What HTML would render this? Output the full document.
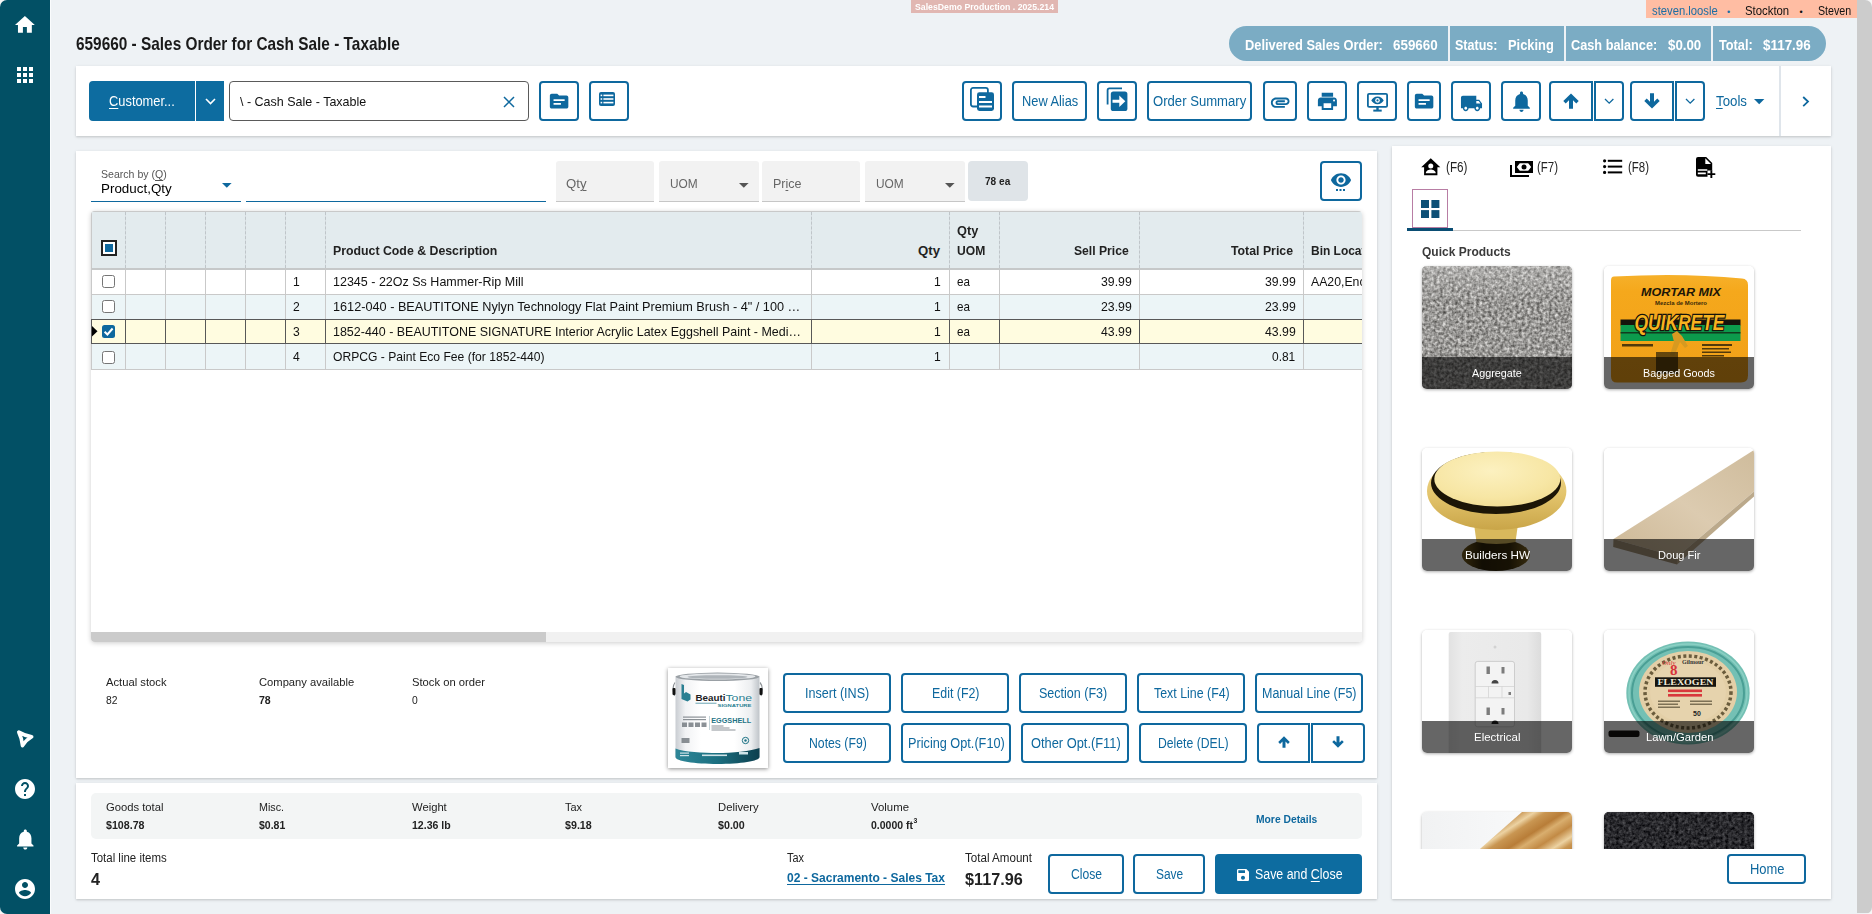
<!DOCTYPE html>
<html lang="en">
<head>
<meta charset="utf-8">
<title>659660 - Sales Order for Cash Sale - Taxable</title>
<style>
html,body{margin:0;padding:0}
html{background:#f7f6f6}
body{width:1872px;height:914px;position:relative;overflow:hidden;font-family:"Liberation Sans",sans-serif;color:#212529;font-size:13px}
#app{position:absolute;left:0;top:0;width:1872px;height:914px;background:#eef2f5;border-radius:7px;overflow:hidden}
#app *{box-sizing:border-box}
.a{position:absolute;margin:0;padding:0}
.t{position:absolute;white-space:nowrap;line-height:1;transform-origin:0 50%;display:block}
.i{position:absolute;display:block;overflow:visible}
.card{position:absolute;background:#fff;box-shadow:0 1px 2px rgba(0,0,0,.13),0 1px 4px rgba(0,0,0,.08)}
.btn{position:absolute;margin:0;padding:0;border:2px solid #0e689e;border-radius:4px;background:#fff;color:#0e689e;font:inherit;display:block}
.btn.p{background:#0d6ca0;border-color:#0d6ca0;color:#fff}
.btn.l{border-radius:4px 0 0 4px}
.btn.r{border-radius:0 4px 4px 0}
.fld{position:absolute;background:#f2f2f2;border-bottom:1px solid #c6c6c6;border-radius:3px 3px 0 0}
u{text-decoration:underline;text-decoration-thickness:1px;text-underline-offset:1.5px}

</style>
</head>
<body>
<div id="app">
<nav class="a" style="left:0;top:0;width:51px;height:914px;background:#025065;border-right:1px solid #fafcfd">
<svg class="i" style="left:13.2px;top:13px;" width="23.8" height="23.8" viewBox="0 0 24 24" aria-hidden="true"><path fill="#fff" d="M10 20v-6h4v6h5v-8h3L12 3 2 12h3v8z"/></svg>
<svg class="i" style="left:13.05px;top:63.1px;" width="24" height="24" viewBox="0 0 24 24" aria-hidden="true"><path fill="#fff" d="M4 8h4V4H4v4zm6 12h4v-4h-4v4zm-6 0h4v-4H4v4zm0-6h4v-4H4v4zm6 0h4v-4h-4v4zm6-10v4h4V4h-4zm-6 4h4V4h-4v4zm6 6h4v-4h-4v4zm0 6h4v-4h-4v4z"/></svg>
<svg class="i" style="left:15px;top:728px;" width="22" height="22" viewBox="0 0 22 22" aria-hidden="true"><path d="M3.8 4.1Q10.1 7.8 16.7 8.8Q11 12 7.5 17.6Q7 10.6 3.8 4.1Z" fill="none" stroke="#fff" stroke-width="3.6" stroke-linejoin="round"/></svg>
<svg class="i" style="left:13px;top:777px;" width="24" height="24" viewBox="0 0 24 24" aria-hidden="true"><path fill="#fff" d="M12 2C6.48 2 2 6.48 2 12s4.48 10 10 10 10-4.48 10-10S17.52 2 12 2zm1 17h-2v-2h2v2zm2.07-7.75l-.9.92C13.45 12.9 13 13.5 13 15h-2v-.5c0-1.1.45-2.1 1.17-2.83l1.24-1.26c.37-.36.59-.86.59-1.41 0-1.1-.9-2-2-2s-2 .9-2 2H8c0-2.21 1.79-4 4-4s4 1.79 4 4c0 .88-.36 1.68-.93 2.25z"/></svg>
<svg class="i" style="left:12.7px;top:826.7px;" width="24.6" height="24.6" viewBox="0 0 24 24" aria-hidden="true"><path fill="#fff" d="M12 22c1.1 0 2-.9 2-2h-4c0 1.1.89 2 2 2zm6-6v-5c0-3.07-1.64-5.64-4.5-6.32V4c0-.83-.67-1.5-1.5-1.5s-1.5.67-1.5 1.5v.68C7.63 5.36 6 7.92 6 11v5l-2 2v1h16v-1l-2-2z"/></svg>
<svg class="i" style="left:13px;top:877px;" width="24" height="24" viewBox="0 0 24 24" aria-hidden="true"><path fill="#fff" d="M12 2C6.48 2 2 6.48 2 12s4.48 10 10 10 10-4.48 10-10S17.52 2 12 2zm0 3c1.66 0 3 1.34 3 3s-1.34 3-3 3-3-1.34-3-3 1.34-3 3-3zm0 14.2c-2.5 0-4.71-1.28-6-3.22.03-1.99 4-3.08 6-3.08 1.99 0 5.97 1.09 6 3.08-1.29 1.94-3.5 3.22-6 3.22z"/></svg>
</nav>
<div class="a" style="left:1857px;top:0px;width:15px;height:913px;background:#cccccc"></div>
<main>
<div class="a" style="left:911px;top:0px;width:147px;height:13px;background:#e1b7b2">
<span class="t" style="left:3.8px;top:2px;font-size:9.5px;font-weight:700;color:#fff;transform:scaleX(0.9172);">SalesDemo Production . 2025.214</span>
</div>
<div class="a" style="left:1646px;top:0px;width:211px;height:18px;background:#ffbda3">
<span class="t" style="left:5.5px;top:5px;font-size:12px;color:#1c6ea4;transform:scaleX(0.9387);">steven.loosle</span>
<span class="t" style="left:81px;top:8px;font-size:9px;color:#1c6ea4;">•</span>
<span class="t" style="left:99px;top:5px;font-size:12px;color:#111;transform:scaleX(0.9464);">Stockton</span>
<span class="t" style="left:153.5px;top:8px;font-size:9px;color:#111;">•</span>
<span class="t" style="left:172.25px;top:5px;font-size:12px;color:#111;transform:scaleX(0.89);">Steven</span>
</div>
<h1 class="a" style="left:0;top:0;width:0;height:0;font-size:inherit;font-weight:inherit">
<span class="t" style="left:76.25px;top:35px;font-size:18.5px;font-weight:700;color:#1a1a1a;transform:scaleX(0.8314);">659660 - Sales Order for Cash Sale - Taxable</span>
</h1>
<div class="a" style="left:1229px;top:26px;width:597px;height:35px;border-radius:17.5px;overflow:hidden;background:#eef2f6">
<div class="a" style="left:0px;top:0px;width:219px;height:35px;background:#7bacc4">
<span class="t" style="left:16px;top:11px;font-size:15px;font-weight:700;color:#fff;transform:scaleX(0.856);">Delivered Sales Order:</span>
<span class="t" style="left:164px;top:11px;font-size:15px;font-weight:700;color:#fff;transform:scaleX(0.8939);">659660</span>
</div>
<div class="a" style="left:221px;top:0px;width:114px;height:35px;background:#7bacc4">
<span class="t" style="left:5.25px;top:11px;font-size:15px;font-weight:700;color:#fff;transform:scaleX(0.8359);">Status:</span>
<span class="t" style="left:58.25px;top:11px;font-size:15px;font-weight:700;color:#fff;transform:scaleX(0.8574);">Picking</span>
</div>
<div class="a" style="left:337px;top:0px;width:145px;height:35px;background:#7bacc4">
<span class="t" style="left:5px;top:11px;font-size:15px;font-weight:700;color:#fff;transform:scaleX(0.8479);">Cash balance:</span>
<span class="t" style="left:101.75px;top:11px;font-size:15px;font-weight:700;color:#fff;transform:scaleX(0.8856);">$0.00</span>
</div>
<div class="a" style="left:484px;top:0px;width:113px;height:35px;background:#7bacc4">
<span class="t" style="left:5.5px;top:11px;font-size:15px;font-weight:700;color:#fff;transform:scaleX(0.8497);">Total:</span>
<span class="t" style="left:50.25px;top:11px;font-size:15px;font-weight:700;color:#fff;transform:scaleX(0.8941);">$117.96</span>
</div>
</div>
<section class="card" style="left:76px;top:66px;width:1755px;height:70px;">
<button class="btn p l" type="button" style="left:13px;top:15px;width:106px;height:40px;">
<span class="t" style="left:18.25px;top:11px;font-size:14px;color:#fff;transform:scaleX(0.9184);"><u>C</u>ustomer...</span>
</button>
<button class="btn p" type="button" style="left:120px;top:15px;width:28px;height:40px;border-radius:0">
<svg class="i" style="left:6.5px;top:14.6px;" width="11" height="7" viewBox="0 0 11 7" aria-hidden="true"><path d="M1 1l4.5 4.5L10 1" fill="none" stroke="#fff" stroke-width="1.6"/></svg>
</button>
<div class="a" style="left:153px;top:15px;width:300px;height:40px;border:1px solid #5a5a5a;border-radius:4px;background:#fff">
<span class="t" style="left:10px;top:13px;font-size:13.2px;color:#111;transform:scaleX(0.948);">\ - Cash Sale - Taxable</span>
<svg class="i" style="left:273px;top:14px;" width="12" height="12" viewBox="0 0 12 12" aria-hidden="true"><path d="M1 1l10 10M11 1L1 11" fill="none" stroke="#0e689e" stroke-width="1.5"/></svg>
</div>
<button class="btn" type="button" style="left:463px;top:15px;width:40px;height:40px;">
<svg class="i" style="left:6.9px;top:7.3px;" width="22.2" height="22.2" viewBox="0 0 24 24" aria-hidden="true"><path fill="#0e689e" d="M20 6h-8l-2-2H4c-1.1 0-1.99.9-1.99 2L2 18c0 1.1.9 2 2 2h16c1.1 0 2-.9 2-2V8c0-1.1-.9-2-2-2zm-6 10H6v-2h8v2zm4-4H6v-2h12v2z"/></svg>
</button>
<button class="btn" type="button" style="left:513px;top:15px;width:40px;height:40px;">
<svg class="i" style="left:8px;top:9px;" width="16" height="14" viewBox="0 0 16 14" aria-hidden="true"><rect x="0" y="0" width="16" height="14" rx="2" fill="#0e689e"/><g fill="#fff"><rect x="1.6" y="2.6" width="1.6" height="1.6"/><rect x="4.4" y="2.6" width="10" height="1.6"/><rect x="1.6" y="6.2" width="1.6" height="1.6"/><rect x="4.4" y="6.2" width="10" height="1.6"/><rect x="1.6" y="9.8" width="1.6" height="1.6"/><rect x="4.4" y="9.8" width="10" height="1.6"/></g></svg>
</button>
<button class="btn" type="button" style="left:886px;top:15px;width:40px;height:40px;">
<svg class="i" style="left:6px;top:4px;" width="24" height="24" viewBox="0 0 24 24" aria-hidden="true"><rect x="0.9" y="0.9" width="17" height="18.6" rx="2.2" fill="#fff" stroke="#0e689e" stroke-width="1.8"/><rect x="7" y="5.2" width="17" height="18.8" rx="2.4" fill="#0e689e"/><g fill="#fff"><rect x="9" y="9" width="6.5" height="2"/><rect x="9" y="14" width="13" height="2"/><rect x="9" y="18.5" width="13" height="2"/></g></svg>
</button>
<button class="btn" type="button" style="left:936px;top:15px;width:75px;height:40px;">
<span class="t" style="left:7.5px;top:11px;font-size:14px;color:#0e689e;transform:scaleX(0.9151);">New Alias</span>
</button>
<button class="btn" type="button" style="left:1021px;top:15px;width:40px;height:40px;">
<svg class="i" style="left:7px;top:4px;" width="22" height="24" viewBox="0 0 22 24" aria-hidden="true"><path d="M1.6 17.6V3.2c0-1 .8-1.8 1.8-1.8H16" fill="none" stroke="#0e689e" stroke-width="1.8"/><rect x="4.8" y="4.4" width="16.6" height="19.6" rx="2.6" fill="#0e689e"/><path d="M6.5 12.7h6.8V8.5l6 5.7-6 5.7v-4.2H6.5z" fill="#fff"/></svg>
</button>
<button class="btn" type="button" style="left:1071px;top:15px;width:105px;height:40px;">
<span class="t" style="left:4px;top:11px;font-size:14px;color:#0e689e;transform:scaleX(0.9365);">Order Summary</span>
</button>
<button class="btn" type="button" style="left:1187px;top:15px;width:34px;height:40px;">
<svg class="i" style="left:4.3px;top:7.7px;" width="22.4" height="22.4" viewBox="0 0 24 24" aria-hidden="true"><path fill="#0e689e" d="M2 12.5C2 9.46 4.46 7 7.5 7H18c2.21 0 4 1.79 4 4s-1.79 4-4 4H9.5C8.12 15 7 13.88 7 12.5S8.12 10 9.5 10H17v2H9.41c-.55 0-.55 1 0 1H18c1.1 0 2-.9 2-2s-.9-2-2-2H7.5C5.57 9 4 10.57 4 12.5S5.57 16 7.5 16H17v2H7.5C4.46 18 2 15.54 2 12.5z"/></svg>
</button>
<button class="btn" type="button" style="left:1231px;top:15px;width:40px;height:40px;">
<svg class="i" style="left:7.1px;top:7.4px;" width="22.8" height="22.8" viewBox="0 0 24 24" aria-hidden="true"><path fill="#0e689e" d="M19 8H5c-1.66 0-3 1.34-3 3v6h4v4h12v-4h4v-6c0-1.66-1.34-3-3-3zm-3 11H8v-5h8v5zm3-7c-.55 0-1-.45-1-1s.45-1 1-1 1 .45 1 1-.45 1-1 1zm-1-9H6v4h12V3z"/></svg>
</button>
<button class="btn" type="button" style="left:1281px;top:15px;width:40px;height:40px;">
<svg class="i" style="left:8px;top:9.5px;fill:#0e689e" width="21" height="19" viewBox="0 0 21 19" aria-hidden="true"><rect x="0.9" y="0.9" width="19.2" height="13" rx="1.2" fill="#fff" stroke="#0e689e" stroke-width="1.8"/><rect x="9.3" y="14" width="2.4" height="3"/><rect x="6.3" y="16.6" width="8.4" height="2" fill="#0e689e"/><path d="M10.5 3.6c-3 0-5.2 2-6.2 3.8 1 1.8 3.2 3.8 6.2 3.8s5.2-2 6.2-3.8c-1-1.8-3.2-3.8-6.2-3.8z" fill="#0e689e"/><circle cx="10.5" cy="7.4" r="2.3" fill="#fff"/><circle cx="10.5" cy="7.4" r="1.1" fill="#0e689e"/></svg>
</button>
<button class="btn" type="button" style="left:1331px;top:15px;width:34px;height:40px;">
<svg class="i" style="left:4.4px;top:7.4px;" width="22.2" height="22.2" viewBox="0 0 24 24" aria-hidden="true"><path fill="#0e689e" d="M20 6h-8l-2-2H4c-1.1 0-1.99.9-1.99 2L2 18c0 1.1.9 2 2 2h16c1.1 0 2-.9 2-2V8c0-1.1-.9-2-2-2zm-6 10H6v-2h8v2zm4-4H6v-2h12v2z"/></svg>
</button>
<button class="btn" type="button" style="left:1375px;top:15px;width:40px;height:40px;">
<svg class="i" style="left:7px;top:9px;" width="23" height="23" viewBox="0 0 24 24" aria-hidden="true"><path fill="#0e689e" d="M20 8h-3V4H3c-1.1 0-2 .9-2 2v11h2c0 1.66 1.34 3 3 3s3-1.34 3-3h6c0 1.66 1.34 3 3 3s3-1.34 3-3h2v-5l-3-4zM6 18.5c-.83 0-1.5-.67-1.5-1.5s.67-1.5 1.5-1.5 1.5.67 1.5 1.5-.67 1.5-1.5 1.5zm13.5-9l1.96 2.5H17V9.5h2.5zm-1.5 9c-.83 0-1.5-.67-1.5-1.5s.67-1.5 1.5-1.5 1.5.67 1.5 1.5-.67 1.5-1.5 1.5z"/></svg>
</button>
<button class="btn" type="button" style="left:1425px;top:15px;width:40px;height:40px;">
<svg class="i" style="left:5.9px;top:5.9px;" width="25" height="25" viewBox="0 0 24 24" aria-hidden="true"><path fill="#0e689e" d="M12 22c1.1 0 2-.9 2-2h-4c0 1.1.89 2 2 2zm6-6v-5c0-3.07-1.64-5.64-4.5-6.32V4c0-.83-.67-1.5-1.5-1.5s-1.5.67-1.5 1.5v.68C7.63 5.36 6 7.92 6 11v5l-2 2v1h16v-1l-2-2z"/></svg>
</button>
<button class="btn l" type="button" style="left:1473px;top:15px;width:44px;height:40px;">
<svg class="i" style="left:11.8px;top:10.2px;" width="16" height="16" viewBox="0 0 16 16" aria-hidden="true"><path d="M8 .4L15.7 8.1 13.3 10.5 10 7.2V15.8H6V7.2L2.7 10.5 .3 8.1Z" fill="#0e689e"/></svg>
</button>
<button class="btn r" type="button" style="left:1518px;top:15px;width:30px;height:40px;">
<svg class="i" style="left:7.6px;top:14.6px;" width="10.4" height="6.4" viewBox="0 0 10.4 6.4" aria-hidden="true"><path d="M1 1l4.2 4.2L9.4 1" fill="none" stroke="#0e689e" stroke-width="1.3"/></svg>
</button>
<button class="btn l" type="button" style="left:1554px;top:15px;width:44px;height:40px;">
<svg class="i" style="left:11.7px;top:10px;transform:scaleY(-1)" width="16" height="16" viewBox="0 0 16 16" aria-hidden="true"><path d="M8 .4L15.7 8.1 13.3 10.5 10 7.2V15.8H6V7.2L2.7 10.5 .3 8.1Z" fill="#0e689e"/></svg>
</button>
<button class="btn r" type="button" style="left:1599px;top:15px;width:30px;height:40px;">
<svg class="i" style="left:7.7px;top:14.6px;" width="10.4" height="6.4" viewBox="0 0 10.4 6.4" aria-hidden="true"><path d="M1 1l4.2 4.2L9.4 1" fill="none" stroke="#0e689e" stroke-width="1.3"/></svg>
</button>
<span class="t" style="left:1639.9px;top:28px;font-size:14px;color:#0e689e;transform:scaleX(0.9484);"><u>T</u>ools</span>
<svg class="i" style="left:1678px;top:33px;" width="10.4" height="5.2" viewBox="0 0 10.4 5.2" aria-hidden="true"><path d="M0 0h10.4L5.2 5.2z" fill="#0e689e"/></svg>
<div class="a" style="left:1703px;top:0px;width:2px;height:70px;background:#dfe5eb"></div>
<svg class="i" style="left:1726.4px;top:30.4px;" width="7.6" height="11.2" viewBox="0 0 7.6 11.2" aria-hidden="true"><path d="M1.2 1l4.8 4.6L1.2 10.2" fill="none" stroke="#0e689e" stroke-width="1.8"/></svg>
</section>
<section class="card" style="left:76px;top:151px;width:1301px;height:627px;">
<div class="a" style="left:15px;top:10px;width:150px;height:41px;border-bottom:1px solid #0e689e">
<span class="t" style="left:10.25px;top:8px;font-size:10.5px;color:#555;transform:scaleX(1.006);">Search by (<u>Q</u>)</span>
<span class="t" style="left:10.25px;top:21px;font-size:13.2px;color:#000;transform:scaleX(1.0159);">Product,Qty</span>
<svg class="i" style="left:130.6px;top:22px;" width="9.6" height="4.8" viewBox="0 0 9.6 4.8" aria-hidden="true"><path d="M0 0h9.6L4.8 4.8z" fill="#0e689e"/></svg>
</div>
<div class="a" style="left:170px;top:10px;width:300px;height:41px;border-bottom:1px solid #0e689e"></div>
<div class="fld" style="left:480px;top:10px;width:98px;height:41px;">
<span class="t" style="left:10.25px;top:16px;font-size:13.5px;color:#666;transform:scaleX(0.9755);">Qt<u>y</u></span>
</div>
<div class="fld" style="left:583px;top:10px;width:100px;height:41px;">
<span class="t" style="left:10.5px;top:16px;font-size:13.5px;color:#666;transform:scaleX(0.881);">UOM</span>
<svg class="i" style="left:80px;top:22.4px;" width="9.6" height="4.8" viewBox="0 0 9.6 4.8" aria-hidden="true"><path d="M0 0h9.6L4.8 4.8z" fill="#555"/></svg>
</div>
<div class="fld" style="left:686px;top:10px;width:98px;height:41px;">
<span class="t" style="left:10.5px;top:16px;font-size:13.5px;color:#666;transform:scaleX(0.9264);">Pr<u>i</u>ce</span>
</div>
<div class="fld" style="left:789px;top:10px;width:100px;height:41px;">
<span class="t" style="left:10.5px;top:16px;font-size:13.5px;color:#666;transform:scaleX(0.881);">UOM</span>
<svg class="i" style="left:80px;top:22.4px;" width="9.6" height="4.8" viewBox="0 0 9.6 4.8" aria-hidden="true"><path d="M0 0h9.6L4.8 4.8z" fill="#555"/></svg>
</div>
<div class="a" style="left:892px;top:10px;width:60px;height:40px;background:#dfe4e8;border-radius:4px">
<span class="t" style="left:17.25px;top:15px;font-size:11.5px;font-weight:700;color:#222;transform:scaleX(0.8773);">78 ea</span>
</div>
<button class="btn" type="button" style="left:1244px;top:10px;width:42px;height:40px;">
<svg class="i" style="left:7.7px;top:5.8px;" width="22" height="22" viewBox="0 0 24 24" aria-hidden="true"><path fill="#0e689e" d="M12 4.5C7 4.5 2.73 7.61 1 12c1.73 4.39 6 7.5 11 7.5s9.27-3.11 11-7.5c-1.73-4.39-6-7.5-11-7.5zM12 17c-2.76 0-5-2.24-5-5s2.24-5 5-5 5 2.24 5 5-2.24 5-5 5zm0-8c-1.66 0-3 1.34-3 3s1.34 3 3 3 3-1.34 3-3-1.34-3-3-3z"/></svg>
<svg class="i" style="left:14.2px;top:26px;" width="9" height="2" viewBox="0 0 9 2" aria-hidden="true"><rect x="0" y="0" width="2" height="2" fill="#0e689e"/><rect x="3.5" y="0" width="2" height="2" fill="#0e689e"/><rect x="7" y="0" width="2" height="2" fill="#0e689e"/></svg>
</button>
<div class="a" style="left:15px;top:60px;width:1271px;height:431px;background:#fff;border-radius:4px;overflow:hidden;box-shadow:0 1px 5px rgba(0,0,0,.2)">
<div class="a" style="left:0px;top:0px;width:1271px;height:59px;background:#e3ebee;border-top:1px solid #c9c9c9;border-bottom:2px solid #c6c8c9">
<div class="a" style="left:34px;top:0px;width:1px;height:56px;border-left:1px dashed #bfc5c9;background:#d9dfe3"></div>
<div class="a" style="left:74px;top:0px;width:1px;height:56px;border-left:1px dashed #bfc5c9;background:#d9dfe3"></div>
<div class="a" style="left:114px;top:0px;width:1px;height:56px;border-left:1px dashed #bfc5c9;background:#d9dfe3"></div>
<div class="a" style="left:154px;top:0px;width:1px;height:56px;border-left:1px dashed #bfc5c9;background:#d9dfe3"></div>
<div class="a" style="left:194px;top:0px;width:1px;height:56px;border-left:1px dashed #bfc5c9;background:#d9dfe3"></div>
<div class="a" style="left:234px;top:0px;width:1px;height:56px;border-left:1px dashed #bfc5c9;background:#d9dfe3"></div>
<div class="a" style="left:720px;top:0px;width:1px;height:56px;border-left:1px dashed #bfc5c9;background:#d9dfe3"></div>
<div class="a" style="left:858px;top:0px;width:1px;height:56px;border-left:1px dashed #bfc5c9;background:#d9dfe3"></div>
<div class="a" style="left:908px;top:0px;width:1px;height:56px;border-left:1px dashed #bfc5c9;background:#d9dfe3"></div>
<div class="a" style="left:1048px;top:0px;width:1px;height:56px;border-left:1px dashed #bfc5c9;background:#d9dfe3"></div>
<div class="a" style="left:1212px;top:0px;width:1px;height:56px;border-left:1px dashed #bfc5c9;background:#d9dfe3"></div>
<div class="a" style="left:0px;top:0px;width:1px;height:56px;background:#c9c9c9"></div>
<div class="a" style="left:10px;top:28px;width:16px;height:16px;border:2px solid #222;background:#fff"></div>
<div class="a" style="left:14px;top:32px;width:8px;height:8px;background:#0e689e"></div>
<span class="t" style="left:242.25px;top:32px;font-size:13.2px;font-weight:700;color:#222;transform:scaleX(0.934);">Product Code &amp; Description</span>
<span class="t" style="left:827px;top:32px;font-size:13.2px;font-weight:700;color:#222;">Qty</span>
<span class="t" style="left:866.25px;top:12px;font-size:13.2px;font-weight:700;color:#222;transform:scaleX(0.9666);">Qty</span>
<span class="t" style="left:866.25px;top:32px;font-size:13.2px;font-weight:700;color:#222;transform:scaleX(0.9178);">UOM</span>
<span class="t" style="left:983.25px;top:32px;font-size:13.2px;font-weight:700;color:#222;transform:scaleX(0.9219);">Sell Price</span>
<span class="t" style="left:1140px;top:32px;font-size:13.2px;font-weight:700;color:#222;transform:scaleX(0.933);">Total Price</span>
<span class="t" style="left:1220px;top:32px;font-size:13.2px;font-weight:700;color:#222;transform:scaleX(0.9068);">Bin Location</span>
</div>
<div class="a" style="left:0px;top:59px;width:1271px;height:25px;background:#fff;border-bottom:1px solid #c9c9c9">
<div class="a" style="left:0px;top:0px;width:1px;height:25px;background:#c9c9c9"></div>
<div class="a" style="left:34px;top:0px;width:1px;height:25px;background:#c9c9c9"></div>
<div class="a" style="left:74px;top:0px;width:1px;height:25px;background:#c9c9c9"></div>
<div class="a" style="left:114px;top:0px;width:1px;height:25px;background:#c9c9c9"></div>
<div class="a" style="left:154px;top:0px;width:1px;height:25px;background:#c9c9c9"></div>
<div class="a" style="left:194px;top:0px;width:1px;height:25px;background:#c9c9c9"></div>
<div class="a" style="left:234px;top:0px;width:1px;height:25px;background:#c9c9c9"></div>
<div class="a" style="left:720px;top:0px;width:1px;height:25px;background:#c9c9c9"></div>
<div class="a" style="left:858px;top:0px;width:1px;height:25px;background:#c9c9c9"></div>
<div class="a" style="left:908px;top:0px;width:1px;height:25px;background:#c9c9c9"></div>
<div class="a" style="left:1048px;top:0px;width:1px;height:25px;background:#c9c9c9"></div>
<div class="a" style="left:1212px;top:0px;width:1px;height:25px;background:#c9c9c9"></div>
<div class="a" style="left:11px;top:5px;width:13px;height:13px;background:#fff;border:1px solid #767676;border-radius:2.5px"></div>
<span class="t" style="left:201.9px;top:5px;font-size:13.2px;color:#111;transform:scaleX(0.92);">1</span>
<span class="t" style="left:242.25px;top:5px;font-size:13.2px;color:#111;transform:scaleX(0.9486);">12345 - 22Oz Ss Hammer-Rip Mill</span>
<span class="t" style="left:843.49px;top:5px;font-size:13.2px;color:#111;transform:scaleX(0.92);">1</span>
<span class="t" style="left:866.25px;top:5px;font-size:13.2px;color:#111;transform:scaleX(0.886);">ea</span>
<span class="t" style="left:1010px;top:5px;font-size:13.2px;color:#111;transform:scaleX(0.9314);">39.99</span>
<span class="t" style="left:1173.75px;top:5px;font-size:13.2px;color:#111;transform:scaleX(0.9314);">39.99</span>
<span class="t" style="left:1220px;top:5px;font-size:13.2px;color:#111;transform:scaleX(0.93);">AA20,Enc</span>
</div>
<div class="a" style="left:0px;top:84px;width:1271px;height:24px;background:#ecf5f7;">
<div class="a" style="left:0px;top:0px;width:1px;height:24px;background:#c9c9c9"></div>
<div class="a" style="left:34px;top:0px;width:1px;height:24px;background:#c9c9c9"></div>
<div class="a" style="left:74px;top:0px;width:1px;height:24px;background:#c9c9c9"></div>
<div class="a" style="left:114px;top:0px;width:1px;height:24px;background:#c9c9c9"></div>
<div class="a" style="left:154px;top:0px;width:1px;height:24px;background:#c9c9c9"></div>
<div class="a" style="left:194px;top:0px;width:1px;height:24px;background:#c9c9c9"></div>
<div class="a" style="left:234px;top:0px;width:1px;height:24px;background:#c9c9c9"></div>
<div class="a" style="left:720px;top:0px;width:1px;height:24px;background:#c9c9c9"></div>
<div class="a" style="left:858px;top:0px;width:1px;height:24px;background:#c9c9c9"></div>
<div class="a" style="left:908px;top:0px;width:1px;height:24px;background:#c9c9c9"></div>
<div class="a" style="left:1048px;top:0px;width:1px;height:24px;background:#c9c9c9"></div>
<div class="a" style="left:1212px;top:0px;width:1px;height:24px;background:#c9c9c9"></div>
<div class="a" style="left:11px;top:5px;width:13px;height:13px;background:#fff;border:1px solid #767676;border-radius:2.5px"></div>
<span class="t" style="left:201.9px;top:5px;font-size:13.2px;color:#111;transform:scaleX(0.92);">2</span>
<span class="t" style="left:242.25px;top:5px;font-size:13.2px;color:#111;transform:scaleX(0.9619);">1612-040 - BEAUTITONE Nylyn Technology Flat Paint Premium Brush - 4" / 100 …</span>
<span class="t" style="left:843.49px;top:5px;font-size:13.2px;color:#111;transform:scaleX(0.92);">1</span>
<span class="t" style="left:866.25px;top:5px;font-size:13.2px;color:#111;transform:scaleX(0.886);">ea</span>
<span class="t" style="left:1010px;top:5px;font-size:13.2px;color:#111;transform:scaleX(0.9314);">23.99</span>
<span class="t" style="left:1173.75px;top:5px;font-size:13.2px;color:#111;transform:scaleX(0.9314);">23.99</span>
</div>
<div class="a" style="left:0px;top:108px;width:1271px;height:25px;background:#fffce0;border-top:1px solid #585858;border-bottom:1px solid #585858">
<div class="a" style="left:0px;top:-1px;width:1px;height:25px;background:#585858"></div>
<div class="a" style="left:34px;top:-1px;width:1px;height:25px;background:#585858"></div>
<div class="a" style="left:74px;top:-1px;width:1px;height:25px;background:#585858"></div>
<div class="a" style="left:114px;top:-1px;width:1px;height:25px;background:#585858"></div>
<div class="a" style="left:154px;top:-1px;width:1px;height:25px;background:#585858"></div>
<div class="a" style="left:194px;top:-1px;width:1px;height:25px;background:#585858"></div>
<div class="a" style="left:234px;top:-1px;width:1px;height:25px;background:#585858"></div>
<div class="a" style="left:720px;top:-1px;width:1px;height:25px;background:#585858"></div>
<div class="a" style="left:858px;top:-1px;width:1px;height:25px;background:#585858"></div>
<div class="a" style="left:908px;top:-1px;width:1px;height:25px;background:#585858"></div>
<div class="a" style="left:1048px;top:-1px;width:1px;height:25px;background:#585858"></div>
<div class="a" style="left:1212px;top:-1px;width:1px;height:25px;background:#585858"></div>
<div class="a" style="left:11px;top:5px;width:13px;height:13px;background:#0e689e;border-radius:2.5px"></div>
<svg class="i" style="left:11px;top:5px;" width="13" height="13" viewBox="0 0 13 13" aria-hidden="true"><path d="M2.6 6.8l2.8 2.7 5.2-6" fill="none" stroke="#fff" stroke-width="2"/></svg>
<svg class="i" style="left:0.5px;top:5.8px;" width="5.5" height="10.4" viewBox="0 0 5.5 10.4" aria-hidden="true"><path d="M0 0l5.5 5.2L0 10.4z" fill="#000"/></svg>
<span class="t" style="left:201.9px;top:5px;font-size:13.2px;color:#111;transform:scaleX(0.92);">3</span>
<span class="t" style="left:242.25px;top:5px;font-size:13.2px;color:#111;transform:scaleX(0.9455);">1852-440 - BEAUTITONE SIGNATURE Interior Acrylic Latex Eggshell Paint - Medi…</span>
<span class="t" style="left:843.49px;top:5px;font-size:13.2px;color:#111;transform:scaleX(0.92);">1</span>
<span class="t" style="left:866.25px;top:5px;font-size:13.2px;color:#111;transform:scaleX(0.886);">ea</span>
<span class="t" style="left:1010px;top:5px;font-size:13.2px;color:#111;transform:scaleX(0.9314);">43.99</span>
<span class="t" style="left:1173.75px;top:5px;font-size:13.2px;color:#111;transform:scaleX(0.9314);">43.99</span>
</div>
<div class="a" style="left:0px;top:133px;width:1271px;height:26px;background:#ecf5f7;border-bottom:1px solid #c9c9c9">
<div class="a" style="left:0px;top:0px;width:1px;height:26px;background:#c9c9c9"></div>
<div class="a" style="left:34px;top:0px;width:1px;height:26px;background:#c9c9c9"></div>
<div class="a" style="left:74px;top:0px;width:1px;height:26px;background:#c9c9c9"></div>
<div class="a" style="left:114px;top:0px;width:1px;height:26px;background:#c9c9c9"></div>
<div class="a" style="left:154px;top:0px;width:1px;height:26px;background:#c9c9c9"></div>
<div class="a" style="left:194px;top:0px;width:1px;height:26px;background:#c9c9c9"></div>
<div class="a" style="left:234px;top:0px;width:1px;height:26px;background:#c9c9c9"></div>
<div class="a" style="left:720px;top:0px;width:1px;height:26px;background:#c9c9c9"></div>
<div class="a" style="left:858px;top:0px;width:1px;height:26px;background:#c9c9c9"></div>
<div class="a" style="left:908px;top:0px;width:1px;height:26px;background:#c9c9c9"></div>
<div class="a" style="left:1048px;top:0px;width:1px;height:26px;background:#c9c9c9"></div>
<div class="a" style="left:1212px;top:0px;width:1px;height:26px;background:#c9c9c9"></div>
<div class="a" style="left:11px;top:7px;width:13px;height:13px;background:#fff;border:1px solid #767676;border-radius:2.5px"></div>
<span class="t" style="left:201.9px;top:6px;font-size:13.2px;color:#111;transform:scaleX(0.92);">4</span>
<span class="t" style="left:242.25px;top:6px;font-size:13.2px;color:#111;transform:scaleX(0.9189);">ORPCG - Paint Eco Fee (for 1852-440)</span>
<span class="t" style="left:843.49px;top:6px;font-size:13.2px;color:#111;transform:scaleX(0.92);">1</span>
<span class="t" style="left:1181.25px;top:6px;font-size:13.2px;color:#111;transform:scaleX(0.9057);">0.81</span>
</div>
<div class="a" style="left:0px;top:421px;width:1271px;height:10px;background:#f1f1f1"></div>
<div class="a" style="left:0px;top:421px;width:455px;height:10px;background:#cbcbcb"></div>
</div>
<span class="t" style="left:30px;top:526px;font-size:11.5px;color:#222;transform:scaleX(0.9758);">Actual stock</span>
<span class="t" style="left:30px;top:544px;font-size:11.5px;color:#222;transform:scaleX(0.8987);">82</span>
<span class="t" style="left:183.25px;top:526px;font-size:11.5px;color:#222;transform:scaleX(0.9738);">Company available</span>
<span class="t" style="left:183.25px;top:544px;font-size:11.5px;font-weight:700;color:#222;transform:scaleX(0.9182);">78</span>
<span class="t" style="left:336px;top:526px;font-size:11.5px;color:#222;transform:scaleX(0.976);">Stock on order</span>
<span class="t" style="left:336px;top:544px;font-size:11.5px;color:#222;transform:scaleX(0.8976);">0</span>
<div class="a" style="left:592px;top:517px;width:100px;height:100px;background:#fff;box-shadow:0 1px 4px rgba(0,0,0,.45)">
<svg class="i" style="left:0;top:0" width="100" height="100" viewBox="0 0 100 100" role="img" aria-label="BeautiTone Signature Eggshell"><defs><linearGradient id="gc" x1="0" y1="0" x2="1" y2="0"><stop offset="0" stop-color="#c9cdd2"/><stop offset=".12" stop-color="#f2f3f5"/><stop offset=".3" stop-color="#ffffff"/><stop offset=".7" stop-color="#ffffff"/><stop offset=".9" stop-color="#eceef0"/><stop offset="1" stop-color="#bfc4c9"/></linearGradient>
<linearGradient id="gt" x1="0" y1="0" x2="1" y2="0"><stop offset="0" stop-color="#2f8798"/><stop offset=".5" stop-color="#1b6f80"/><stop offset="1" stop-color="#0d3f4e"/></linearGradient></defs>
<rect width="100" height="100" fill="#fff"/>
<path d="M7 14.5C5 17 4.5 22 6.5 28M92 14.5c2.5 3 3 8 1 13.5" fill="none" stroke="#8d9296" stroke-width="1.2"/>
<path d="M7.5 8.5v80.5c0 4 19 7 42 7s42-3 42-7V8.5z" fill="url(#gc)"/>
<path d="M7.5 80.5c8 3.5 28 4.5 42 4.5s34-2 42-5v9c0 4-19 7-42 7s-42-3-42-7z" fill="url(#gt)"/>
<ellipse cx="49.5" cy="8.8" rx="42" ry="4.2" fill="#9aa0a5"/><ellipse cx="49.5" cy="8.5" rx="38" ry="3" fill="#e4e7ea"/><ellipse cx="49.5" cy="9" rx="30" ry="1.8" fill="#aeb4b9"/>
<rect x="4.5" y="20" width="3" height="7" rx="1" fill="#111"/><rect x="91.5" y="20" width="3" height="7" rx="1" fill="#111"/>
<path d="M13.5 16v15l6 2.5 3-2v-5l-4.5-2.5-2 1.5V17z" fill="#2a7f92"/>
<text x="27.5" y="33" font-family="Liberation Sans,sans-serif" font-weight="700" font-size="9.5" fill="#1d1d1f" textLength="30" lengthAdjust="spacingAndGlyphs">Beauti</text><text x="57.5" y="33" font-family="Liberation Sans,sans-serif" font-size="9.5" fill="#2a7f92" textLength="26.5" lengthAdjust="spacingAndGlyphs">Tone</text>
<rect x="27.5" y="34.8" width="21" height=".7" fill="#2a7f92"/>
<text x="49.5" y="39.2" font-family="Liberation Sans,sans-serif" font-weight="700" font-size="4.2" fill="#2a7f92" textLength="34" lengthAdjust="spacingAndGlyphs">SIGNATURE</text>
<text x="43.2" y="54.5" font-family="Liberation Sans,sans-serif" font-weight="700" font-size="7.4" fill="#1f7486" textLength="40" lengthAdjust="spacingAndGlyphs">EGGSHELL</text>
<rect x="41" y="48" width=".6" height="14" fill="#9fb8c0"/>
<g fill="#6f767c" opacity=".8"><rect x="15" y="48.5" width="23" height="1.2"/><rect x="15" y="51" width="23" height="1.2"/><rect x="14" y="54.5" width="5" height="4.5"/><rect x="20.5" y="54.5" width="5" height="4.5"/><rect x="27" y="54.5" width="5" height="4.5"/><rect x="33.5" y="54.5" width="5" height="4.5"/><rect x="43.5" y="57.5" width="12" height="1"/><rect x="43.5" y="59.5" width="18" height="1"/><rect x="43.5" y="61.5" width="24" height="1"/><rect x="13.5" y="70" width="8" height="5"/></g>
<circle cx="77.5" cy="72.5" r="3.2" fill="none" stroke="#1f7486" stroke-width="1"/><circle cx="77.5" cy="72.5" r="1.2" fill="#1f7486"/>
<g fill="#cfe3e8"><rect x="12" y="84.5" width="9" height="1.2"/><rect x="12" y="87" width="9" height="1.2"/><rect x="34" y="86.5" width="25" height="1.6"/><rect x="71" y="84" width="9" height="2.5"/></g></svg>
</div>
<button class="btn" type="button" style="left:707px;top:522px;width:108px;height:40px;">
<span class="t" style="left:20px;top:11px;font-size:14px;color:#0e689e;transform:scaleX(0.8976);">Insert (INS)</span>
</button>
<button class="btn" type="button" style="left:825px;top:522px;width:108px;height:40px;">
<span class="t" style="left:28.5px;top:11px;font-size:14px;color:#0e689e;transform:scaleX(0.8847);">Edit (F2)</span>
</button>
<button class="btn" type="button" style="left:943px;top:522px;width:108px;height:40px;">
<span class="t" style="left:18px;top:11px;font-size:14px;color:#0e689e;transform:scaleX(0.8951);">Section (F3)</span>
</button>
<button class="btn" type="button" style="left:1061px;top:522px;width:108px;height:40px;">
<span class="t" style="left:14.5px;top:11px;font-size:14px;color:#0e689e;transform:scaleX(0.885);">Text Line (F4)</span>
</button>
<button class="btn" type="button" style="left:1179px;top:522px;width:108px;height:40px;">
<span class="t" style="left:5.25px;top:11px;font-size:14px;color:#0e689e;transform:scaleX(0.893);">Manual Line (F5)</span>
</button>
<button class="btn" type="button" style="left:707px;top:572px;width:108px;height:40px;">
<span class="t" style="left:23.5px;top:11px;font-size:14px;color:#0e689e;transform:scaleX(0.8733);">Notes (F9)</span>
</button>
<button class="btn" type="button" style="left:825px;top:572px;width:110px;height:40px;">
<span class="t" style="left:5px;top:11px;font-size:14px;color:#0e689e;transform:scaleX(0.9077);">Pricing Opt.(F10)</span>
</button>
<button class="btn" type="button" style="left:945px;top:572px;width:108px;height:40px;">
<span class="t" style="left:7.5px;top:11px;font-size:14px;color:#0e689e;transform:scaleX(0.9179);">Other Opt.(F11)</span>
</button>
<button class="btn" type="button" style="left:1063px;top:572px;width:108px;height:40px;">
<span class="t" style="left:17px;top:11px;font-size:14px;color:#0e689e;transform:scaleX(0.8712);">Delete (DEL)</span>
</button>
<button class="btn l" type="button" style="left:1181px;top:572px;width:53px;height:40px;">
<svg class="i" style="left:18.5px;top:11.2px;" width="12" height="12" viewBox="0 0 12 12" aria-hidden="true"><path transform="scale(.75)" d="M8 .4L15.7 8.1 13.3 10.5 10 7.2V15.8H6V7.2L2.7 10.5 .3 8.1Z" fill="#0e689e"/></svg>
</button>
<button class="btn r" type="button" style="left:1235px;top:572px;width:54px;height:40px;">
<svg class="i" style="left:19.2px;top:11.2px;transform:scaleY(-1)" width="12" height="12" viewBox="0 0 12 12" aria-hidden="true"><path transform="scale(.75)" d="M8 .4L15.7 8.1 13.3 10.5 10 7.2V15.8H6V7.2L2.7 10.5 .3 8.1Z" fill="#0e689e"/></svg>
</button>
</section>
<section class="card" style="left:76px;top:783px;width:1301px;height:116px;">
<div class="a" style="left:15px;top:10px;width:1271px;height:46px;background:#f3f5f5;border-radius:5px">
<span class="t" style="left:15px;top:9px;font-size:11.5px;color:#222;transform:scaleX(0.9774);">Goods total</span>
<span class="t" style="left:15px;top:27px;font-size:11.5px;font-weight:700;color:#222;transform:scaleX(0.926);">$108.78</span>
<span class="t" style="left:168.25px;top:9px;font-size:11.5px;color:#222;transform:scaleX(0.9313);">Misc.</span>
<span class="t" style="left:168.25px;top:27px;font-size:11.5px;font-weight:700;color:#222;transform:scaleX(0.9121);">$0.81</span>
<span class="t" style="left:321px;top:9px;font-size:11.5px;color:#222;transform:scaleX(0.9763);">Weight</span>
<span class="t" style="left:321px;top:27px;font-size:11.5px;font-weight:700;color:#222;transform:scaleX(0.9182);">12.36 lb</span>
<span class="t" style="left:474px;top:9px;font-size:11.5px;color:#222;transform:scaleX(0.9494);">Tax</span>
<span class="t" style="left:474px;top:27px;font-size:11.5px;font-weight:700;color:#222;transform:scaleX(0.9294);">$9.18</span>
<span class="t" style="left:627px;top:9px;font-size:11.5px;color:#222;transform:scaleX(0.9808);">Delivery</span>
<span class="t" style="left:627px;top:27px;font-size:11.5px;font-weight:700;color:#222;transform:scaleX(0.9294);">$0.00</span>
<span class="t" style="left:779.75px;top:9px;font-size:11.5px;color:#222;transform:scaleX(0.9906);">Volume</span>
<span class="t" style="left:779.75px;top:27px;font-size:11.5px;font-weight:700;color:#222;transform:scaleX(0.9124);">0.0000 ft<sup style="font-size:7.5px;line-height:0;position:relative;top:-1px;margin-left:.5px">3</sup></span>
<span class="t" style="left:1165px;top:21px;font-size:11.5px;font-weight:700;color:#0e689e;transform:scaleX(0.8956);">More Details</span>
</div>
<span class="t" style="left:15.25px;top:69px;font-size:12px;color:#222;transform:scaleX(0.9543);">Total line items</span>
<span class="t" style="left:15px;top:88px;font-size:16.5px;font-weight:700;color:#222;transform:scaleX(0.9796);">4</span>
<span class="t" style="left:711.25px;top:69px;font-size:12px;color:#222;transform:scaleX(0.9097);">Tax</span>
<a class="t lnk" style="left:711.25px;top:88px;font-size:13.6px;font-weight:700;color:#0e689e;transform:scaleX(0.8835);text-decoration:underline;text-decoration-thickness:1px;text-underline-offset:1.5px">02 - Sacramento - Sales Tax</a>
<span class="t" style="left:889.25px;top:69px;font-size:12px;color:#222;transform:scaleX(0.9658);">Total Amount</span>
<span class="t" style="left:889.25px;top:88px;font-size:17px;font-weight:700;color:#222;transform:scaleX(0.9543);">$117.96</span>
<button class="btn" type="button" style="left:972px;top:71px;width:76px;height:40px;">
<span class="t" style="left:20.5px;top:11px;font-size:14px;color:#0e689e;transform:scaleX(0.866);">Close</span>
</button>
<button class="btn" type="button" style="left:1057px;top:71px;width:72px;height:40px;">
<span class="t" style="left:21px;top:11px;font-size:14px;color:#0e689e;transform:scaleX(0.8536);">Save</span>
</button>
<button class="btn p" type="button" style="left:1139px;top:71px;width:147px;height:40px;">
<svg class="i" style="left:18.2px;top:11px;" width="16" height="16" viewBox="0 0 24 24" aria-hidden="true"><path fill="#fff" d="M17 3H5c-1.11 0-2 .9-2 2v14c0 1.1.89 2 2 2h14c1.1 0 2-.9 2-2V7l-4-4zm-5 16c-1.66 0-3-1.34-3-3s1.34-3 3-3 3 1.34 3 3-1.34 3-3 3zm3-10H5V5h10v4z"/></svg>
<span class="t" style="left:37.75px;top:11px;font-size:14px;color:#fff;transform:scaleX(0.8852);">Save and <u>C</u>lose</span>
</button>
</section>
<aside class="card" style="left:1392px;top:146px;width:439px;height:753px;">
<svg class="i" style="left:28.5px;top:11.5px;" width="19.5" height="17.5" viewBox="0 0 19.5 17.5" aria-hidden="true"><path d="M9.75 0.3 19.3 9.2h-2.9v8H3.1v-8H0.2z" fill="#000"/><circle cx="9.75" cy="8" r="2.5" fill="#fff"/><path d="M4.8 15.2c0-2.6 3.3-3.7 4.95-3.7s4.95 1.1 4.95 3.7z" fill="#fff"/></svg>
<span class="t" style="left:53.6px;top:14px;font-size:14px;color:#222;transform:scaleX(0.8336);">(F6)</span>
<svg class="i" style="left:118px;top:15px;" width="23" height="16" viewBox="0 0 23 16" aria-hidden="true"><path d="M1 4v11h18" fill="none" stroke="#000" stroke-width="2"/><rect x="5" y="0" width="18" height="12" fill="#000"/><path d="M6.8 6 9.8 2.3h8.4L21.2 6l-3 3.7H9.8z" fill="#fff"/><circle cx="14" cy="6" r="2.5" fill="#000"/></svg>
<span class="t" style="left:145px;top:14px;font-size:14px;color:#222;transform:scaleX(0.818);">(F7)</span>
<svg class="i" style="left:211px;top:12.9px;" width="19.2" height="15" viewBox="0 0 19.2 15" aria-hidden="true"><g fill="#000"><circle cx="1.6" cy="1.8" r="1.6"/><circle cx="1.6" cy="7.6" r="1.6"/><circle cx="1.6" cy="13.4" r="1.6"/><rect x="4.8" y="0.8" width="14.4" height="2"/><rect x="4.8" y="6.6" width="14.4" height="2"/><rect x="4.8" y="12.4" width="14.4" height="2"/></g></svg>
<span class="t" style="left:236.1px;top:14px;font-size:14px;color:#222;transform:scaleX(0.818);">(F8)</span>
<svg class="i" style="left:303.8px;top:11px;" width="19.5" height="21.2" viewBox="0 0 19.5 21.2" aria-hidden="true"><path d="M2 0h8.2l6 6v7.5h-4.7v6.3H2a2 2 0 0 1-2-2V2a2 2 0 0 1 2-2z" fill="#000"/><path d="M9.3 1.3v5.7h5.7z" fill="#fff"/><path d="M1.8 12.2h9.5v1.6H1.8zM1.8 15.6h8v1.6h-8z" fill="#fff"/><path d="M14.4 13.2h1.9v3h3v1.9h-3v3h-1.9v-3h-3v-1.9h3z" fill="#000"/></svg>
<div class="a" style="left:20px;top:43px;width:36px;height:39px;border:1px solid #b87da4;background:#fff"></div>
<svg class="i" style="left:29.2px;top:54px;" width="18.4" height="18" viewBox="0 0 18.4 18" aria-hidden="true"><g fill="#0d4f76"><rect x="0" y="0" width="8" height="8"/><rect x="10.4" y="0" width="8" height="8"/><rect x="0" y="10.1" width="8" height="7.9"/><rect x="10.4" y="10.1" width="8" height="7.9"/></g></svg>
<div class="a" style="left:61px;top:84px;width:348px;height:1px;background:#c9c9c9"></div>
<div class="a" style="left:15px;top:82px;width:46px;height:3px;background:#0a4d73"></div>
<h2 class="a" style="left:0;top:0;width:0;height:0;font-size:inherit;font-weight:inherit">
<span class="t" style="left:30.25px;top:99px;font-size:13.4px;font-weight:700;color:#3a3a3a;transform:scaleX(0.8967);">Quick Products</span>
</h2>
<div class="a" style="left:15px;top:86px;width:409px;height:617px;overflow:hidden">
<figure class="a" style="left:15px;top:34px;width:150px;height:123px;border-radius:5px;overflow:hidden;background:#fff;box-shadow:0 1px 3px rgba(0,0,0,.32)">
<svg class="i" style="left:0;top:0" width="150" height="123" viewBox="0 0 150 123" aria-hidden="true"><filter id="fa" x="0" y="0" width="100%" height="100%" color-interpolation-filters="sRGB"><feTurbulence type="fractalNoise" baseFrequency="0.33" numOctaves="2" seed="7"/><feColorMatrix type="matrix" values="0 0.8 0 0 0.2  0 0.8 0 0 0.195  0 0.8 0 0 0.185  0 0 0 0 1"/></filter><linearGradient id="ga" x1="0" y1="0" x2="0" y2="1"><stop offset="0" stop-color="#fff" stop-opacity=".22"/><stop offset=".3" stop-color="#fff" stop-opacity="0"/></linearGradient><rect width="150" height="123" fill="#8b8985"/><rect width="150" height="123" filter="url(#fa)"/><rect width="150" height="123" fill="url(#ga)"/></svg>
<figcaption class="a" style="left:0px;top:91px;width:150px;height:32px;background:rgba(0,0,0,.6)">
<span class="t" style="left:50.25px;top:11px;font-size:11.8px;color:#fff;transform:scaleX(0.9136);">Aggregate</span>
</figcaption>
</figure>
<figure class="a" style="left:197px;top:34px;width:150px;height:123px;border-radius:5px;overflow:hidden;background:#fff;box-shadow:0 1px 3px rgba(0,0,0,.32)">
<svg class="i" style="left:0;top:0" width="150" height="123" viewBox="0 0 150 123" aria-hidden="true"><defs><linearGradient id="gb" x1="0" y1="0" x2="0" y2="1"><stop offset="0" stop-color="#f6b02a"/><stop offset=".15" stop-color="#f5a81c"/><stop offset="1" stop-color="#f1a018"/></linearGradient></defs>
<rect width="150" height="123" fill="#fff"/><path d="M10 10.5q-3 0-3 4v96q0 6 6 6h124q7 0 7-7V19q0-6-6-6.5q-60-6-128-2z" fill="url(#gb)"/>
<text x="77" y="29.5" text-anchor="middle" font-family="Liberation Sans,sans-serif" font-weight="700" font-style="italic" font-size="11.5" fill="#1c1608" textLength="80" lengthAdjust="spacingAndGlyphs">MORTAR MIX</text>
<text x="77" y="38.5" text-anchor="middle" font-family="Liberation Sans,sans-serif" font-weight="700" font-size="5.2" fill="#3a2a08" textLength="52" lengthAdjust="spacingAndGlyphs">Mezcla de Mortero</text>
<rect x="16.5" y="53.5" width="120" height="6" fill="#15130c"/><rect x="16.5" y="59" width="120" height="16" fill="#0c9a4c"/><rect x="16.5" y="66" width="120" height="1.5" fill="#15130c" opacity=".7"/>
<text x="75.5" y="63.5" text-anchor="middle" font-family="Liberation Sans,sans-serif" font-weight="700" font-style="italic" font-size="22" fill="#f7b21f" stroke="#15130c" stroke-width="2.6" paint-order="stroke" textLength="90" lengthAdjust="spacingAndGlyphs">QUIKRETE</text>
<path d="M68 68l5-3 5 5 6 10-3 2-5-6-6 14-4-1 4-13z" fill="#d79a20"/><path d="M52 86h22v22H52z" fill="#2a2008" opacity=".7"/>
<g fill="#2a2008" opacity=".8"><rect x="18" y="78" width="31" height="2.5"/><rect x="98" y="78" width="30" height="2"/><rect x="98" y="82" width="27" height="1.5"/><rect x="98" y="85.5" width="29" height="1.5"/><rect x="98" y="89" width="22" height="1.5"/></g></svg>
<figcaption class="a" style="left:0px;top:91px;width:150px;height:32px;background:rgba(0,0,0,.6)">
<span class="t" style="left:39.25px;top:11px;font-size:11.8px;color:#fff;transform:scaleX(0.9146);">Bagged Goods</span>
</figcaption>
</figure>
<figure class="a" style="left:15px;top:216px;width:150px;height:123px;border-radius:5px;overflow:hidden;background:#fff;box-shadow:0 1px 3px rgba(0,0,0,.32)">
<svg class="i" style="left:0;top:0" width="150" height="123" viewBox="0 0 150 123" aria-hidden="true"><defs><radialGradient id="gk" cx=".45" cy=".35" r=".8"><stop offset="0" stop-color="#fcf1c0"/><stop offset=".6" stop-color="#f7e6a4"/><stop offset="1" stop-color="#efd88a"/></radialGradient><linearGradient id="gk2" x1="0" y1="0" x2="0" y2="1"><stop offset="0" stop-color="#f2dc94"/><stop offset=".55" stop-color="#e3c46c"/><stop offset="1" stop-color="#c9a548"/></linearGradient><linearGradient id="gk3" x1="0" y1="0" x2="1" y2="0"><stop offset="0" stop-color="#7c6220"/><stop offset=".3" stop-color="#2e230a"/><stop offset=".7" stop-color="#3a2c0c"/><stop offset="1" stop-color="#8a6e28"/></linearGradient></defs>
<rect width="150" height="123" fill="#fff"/>
<ellipse cx="73.8" cy="107" rx="34" ry="16" fill="url(#gk3)"/>
<path d="M52 76h44l-2.5 18q-19 4-39 0z" fill="#d8b85c"/>
<ellipse cx="74.7" cy="43" rx="69.7" ry="39" fill="url(#gk2)"/>
<ellipse cx="74" cy="35" rx="65" ry="31" fill="#1c1506"/>
<ellipse cx="75.3" cy="31" rx="63" ry="27.5" fill="url(#gk)"/></svg>
<figcaption class="a" style="left:0px;top:91px;width:150px;height:32px;background:rgba(0,0,0,.6)">
<span class="t" style="left:42.5px;top:11px;font-size:11.8px;color:#fff;transform:scaleX(0.9914);">Builders HW</span>
</figcaption>
</figure>
<figure class="a" style="left:197px;top:216px;width:150px;height:123px;border-radius:5px;overflow:hidden;background:#fff;box-shadow:0 1px 3px rgba(0,0,0,.32)">
<svg class="i" style="left:0;top:0" width="150" height="123" viewBox="0 0 150 123" aria-hidden="true"><defs><linearGradient id="gf" x1="0" y1="1" x2="1" y2="0"><stop offset="0" stop-color="#cdb896"/><stop offset=".5" stop-color="#dccbb0"/><stop offset="1" stop-color="#cfbc9c"/></linearGradient></defs>
<rect width="150" height="123" fill="#fff"/><path d="M9.5 91 150 2v41.5L73 109z" fill="url(#gf)"/><path d="M9.5 91 73 109v7.5L9.2 99z" fill="#a8967a"/><path d="M73 109 150 43.5v5L73 116.5z" fill="#bba98b"/></svg>
<figcaption class="a" style="left:0px;top:91px;width:150px;height:32px;background:rgba(0,0,0,.6)">
<span class="t" style="left:53.5px;top:11px;font-size:11.8px;color:#fff;transform:scaleX(0.9392);">Doug Fir</span>
</figcaption>
</figure>
<figure class="a" style="left:15px;top:398px;width:150px;height:123px;border-radius:5px;overflow:hidden;background:#fff;box-shadow:0 1px 3px rgba(0,0,0,.32)">
<svg class="i" style="left:0;top:0" width="150" height="123" viewBox="0 0 150 123" aria-hidden="true"><defs><linearGradient id="ge" x1="0" y1="0" x2="1" y2="0"><stop offset="0" stop-color="#e2e2e2"/><stop offset=".15" stop-color="#ececec"/><stop offset=".85" stop-color="#e9e9e9"/><stop offset="1" stop-color="#dcdcdc"/></linearGradient></defs>
<rect width="150" height="123" fill="#fff"/><rect x="26.7" y="2" width="92.5" height="126" rx="2" fill="url(#ge)"/>
<rect x="53.2" y="31.4" width="39.3" height="65.4" rx="2.5" fill="#f3f3f3" stroke="#c4c4c4" stroke-width=".8"/>
<path d="M53.5 56.5h39M53.5 67.8h39M66.5 56.5v11.3M80 56.5v11.3" stroke="#d0d0d0" stroke-width=".7" fill="none"/>
<g fill="#7c7c7c"><rect x="64.5" y="36.5" width="3.4" height="7.5"/><rect x="79.5" y="37" width="3" height="6.5"/><path d="M69.5 53.5a3.5 3.5 0 0 1 7 0z" fill="#444"/><rect x="64.5" y="77.5" width="3.4" height="7.5"/><rect x="79.5" y="78" width="3" height="6.5"/><path d="M69.5 94a3.5 3.5 0 0 1 7 0z" fill="#222"/><rect x="86.5" y="62" width="2.5" height="3"/><circle cx="73" cy="17" r="1.5" fill="#d2d2d2"/></g></svg>
<figcaption class="a" style="left:0px;top:91px;width:150px;height:32px;background:rgba(0,0,0,.6)">
<span class="t" style="left:52px;top:11px;font-size:11.8px;color:#fff;transform:scaleX(0.9716);">Electrical</span>
</figcaption>
</figure>
<figure class="a" style="left:197px;top:398px;width:150px;height:123px;border-radius:5px;overflow:hidden;background:#fff;box-shadow:0 1px 3px rgba(0,0,0,.32)">
<svg class="i" style="left:0;top:0" width="150" height="123" viewBox="0 0 150 123" aria-hidden="true"><rect width="150" height="123" fill="#fff"/>
<ellipse cx="84" cy="63" rx="61.7" ry="51.5" fill="#74c0b4"/><ellipse cx="84" cy="63" rx="56" ry="46" fill="none" stroke="#4a9f95" stroke-width="2"/><ellipse cx="84" cy="63" rx="59" ry="49" fill="none" stroke="#8ad0c4" stroke-width="1.5"/>
<ellipse cx="84" cy="62" rx="49" ry="41" fill="#e3cfa7"/><ellipse cx="84" cy="62" rx="43" ry="36" fill="none" stroke="#4b3f22" stroke-width="3.5" stroke-dasharray="3 2.5" opacity=".8"/>
<ellipse cx="84" cy="62" rx="38" ry="31" fill="#e6d3ad"/>
<text x="66" y="45" font-family="Liberation Serif,serif" font-weight="700" font-size="15" fill="#d6343a">8</text><text x="58" y="35" font-family="Liberation Serif,serif" font-style="italic" font-size="7" fill="#d6343a">Only</text><text x="78" y="34" font-family="Liberation Serif,serif" font-weight="700" font-size="6" fill="#333">Gilmour</text>
<rect x="51" y="47.3" width="61" height="9.5" fill="#17150f"/><text x="81.5" y="55" text-anchor="middle" font-family="Liberation Serif,serif" font-weight="700" font-size="8.5" fill="#f1ead8" textLength="56" lengthAdjust="spacingAndGlyphs">FLEXOGEN</text>
<g fill="#d8383c"><rect x="64" y="59.5" width="34" height="2.6"/><rect x="64" y="64" width="34" height="2.6"/></g><g fill="#5a5138" opacity=".75"><rect x="54" y="70.5" width="22" height="1.5"/><rect x="54" y="73.5" width="20" height="1.5"/><rect x="54" y="76.5" width="22" height="1.5"/><rect x="86" y="70.5" width="22" height="1.5"/><rect x="86" y="73.5" width="22" height="1.5"/></g>
<text x="89" y="85.5" font-family="Liberation Sans,sans-serif" font-weight="700" font-size="7" fill="#222">50</text>
<rect x="4.5" y="100.5" width="31" height="6.5" rx="2" fill="#15130f"/></svg>
<figcaption class="a" style="left:0px;top:91px;width:150px;height:32px;background:rgba(0,0,0,.6)">
<span class="t" style="left:41.5px;top:11px;font-size:11.8px;color:#fff;transform:scaleX(0.953);">Lawn/Garden</span>
</figcaption>
</figure>
<figure class="a" style="left:15px;top:580px;width:150px;height:123px;border-radius:5px;overflow:hidden;background:#fff;box-shadow:0 1px 3px rgba(0,0,0,.32)">
<svg class="i" style="left:0;top:0" width="150" height="123" viewBox="0 0 150 123" aria-hidden="true"><defs><linearGradient id="gd" x1="0" y1="0" x2="1" y2="0"><stop offset="0" stop-color="#f1f2f3"/><stop offset=".6" stop-color="#f7f8f9"/><stop offset="1" stop-color="#fff"/></linearGradient>
<linearGradient id="gw" gradientUnits="userSpaceOnUse" x1="70" y1="6" x2="92" y2="40" spreadMethod="repeat"><stop offset="0" stop-color="#d9ae6e"/><stop offset=".22" stop-color="#c28a45"/><stop offset=".45" stop-color="#ecd2a2"/><stop offset=".6" stop-color="#c99652"/><stop offset=".85" stop-color="#b87d38"/><stop offset="1" stop-color="#d9ae6e"/></linearGradient></defs>
<rect width="150" height="123" fill="url(#gd)"/><path d="M100 0h50v123H-40z" fill="url(#gw)"/></svg>
</figure>
<figure class="a" style="left:197px;top:580px;width:150px;height:123px;border-radius:5px;overflow:hidden;background:#fff;box-shadow:0 1px 3px rgba(0,0,0,.32)">
<svg class="i" style="left:0;top:0" width="150" height="123" viewBox="0 0 150 123" aria-hidden="true"><filter id="fm" x="0" y="0" width="100%" height="100%" color-interpolation-filters="sRGB"><feTurbulence type="fractalNoise" baseFrequency="0.32" numOctaves="3" seed="11"/><feColorMatrix type="matrix" values="0 0.45 0 0 -0.065  0 0.45 0 0 -0.065  0 0.45 0 0 -0.05  0 0 0 0 1"/></filter><rect width="150" height="123" fill="#27272a"/><rect width="150" height="123" filter="url(#fm)"/></svg>
</figure>
</div>
<button class="btn" type="button" style="left:335px;top:708px;width:79px;height:30px;">
<span class="t" style="left:20.5px;top:6px;font-size:14px;color:#0e689e;transform:scaleX(0.9235);">Home</span>
</button>
</aside>
</main>
</div>
</body>
</html>
